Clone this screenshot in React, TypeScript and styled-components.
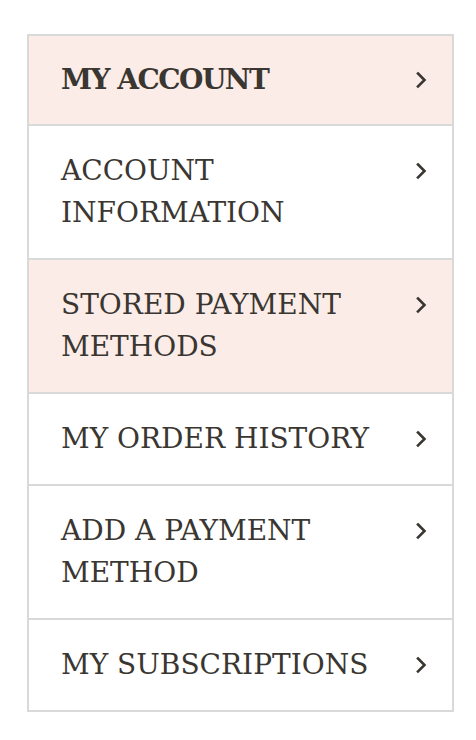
import styled, { createGlobalStyle } from 'styled-components';

const items = [
  { label: 'MY ACCOUNT', bold: true, active: true },
  { label: 'ACCOUNT INFORMATION' },
  { label: 'STORED PAYMENT METHODS', active: true },
  { label: 'MY ORDER HISTORY' },
  { label: 'ADD A PAYMENT METHOD' },
  { label: 'MY SUBSCRIPTIONS' },
];

const Chevron = () => (
  <svg width='12' height='18' viewBox='0 0 12 18' fill='none'>
    <path d='M3 2.5 L9.5 9 L3 15.5' stroke='#3a3631' strokeWidth='2.6' strokeLinecap='square' />
  </svg>
);

const App = () => {
  return (
    <>
      <GlobalStyle />
      <Menu>
        {items.map(item => (
          <Row key={item.label} $active={item.active}>
            <Label $bold={item.bold}>{item.label}</Label>
            <Arrow>
              <Chevron />
            </Arrow>
          </Row>
        ))}
      </Menu>
    </>
  );
};

const GlobalStyle = createGlobalStyle`
  body {
    margin: 0;
    background: #ffffff;
  }
`;

const Menu = styled.ul`
  list-style: none;
  margin: 34px 0 0 27px;
  padding: 0;
  width: 423px;
  border: 2px solid #d9d9d9;
  border-bottom: none;
`;

const Row = styled.li<{ $active?: boolean }>`
  display: flex;
  align-items: flex-start;
  gap: 16px;
  padding: 24px 25px 24px 32px;
  border-bottom: 2px solid #d9d9d9;
  background: ${({ $active }) => ($active ? '#fbece8' : '#ffffff')};

  &:first-child {
    padding-top: 23px;
    padding-bottom: 23px;
  }
`;

const Label = styled.span<{ $bold?: boolean }>`
  flex: 1;
  font-family: 'DejaVu Serif', 'Liberation Serif', serif;
  font-size: 28px;
  line-height: 42px;
  font-weight: ${({ $bold }) => ($bold ? 700 : 400)};
  letter-spacing: ${({ $bold }) => ($bold ? '-1.5px' : 'normal')};
  color: #3a3631;
`;

const Arrow = styled.span`
  display: flex;
  align-items: center;
  height: 42px;
  flex-shrink: 0;
`;

export default App;
